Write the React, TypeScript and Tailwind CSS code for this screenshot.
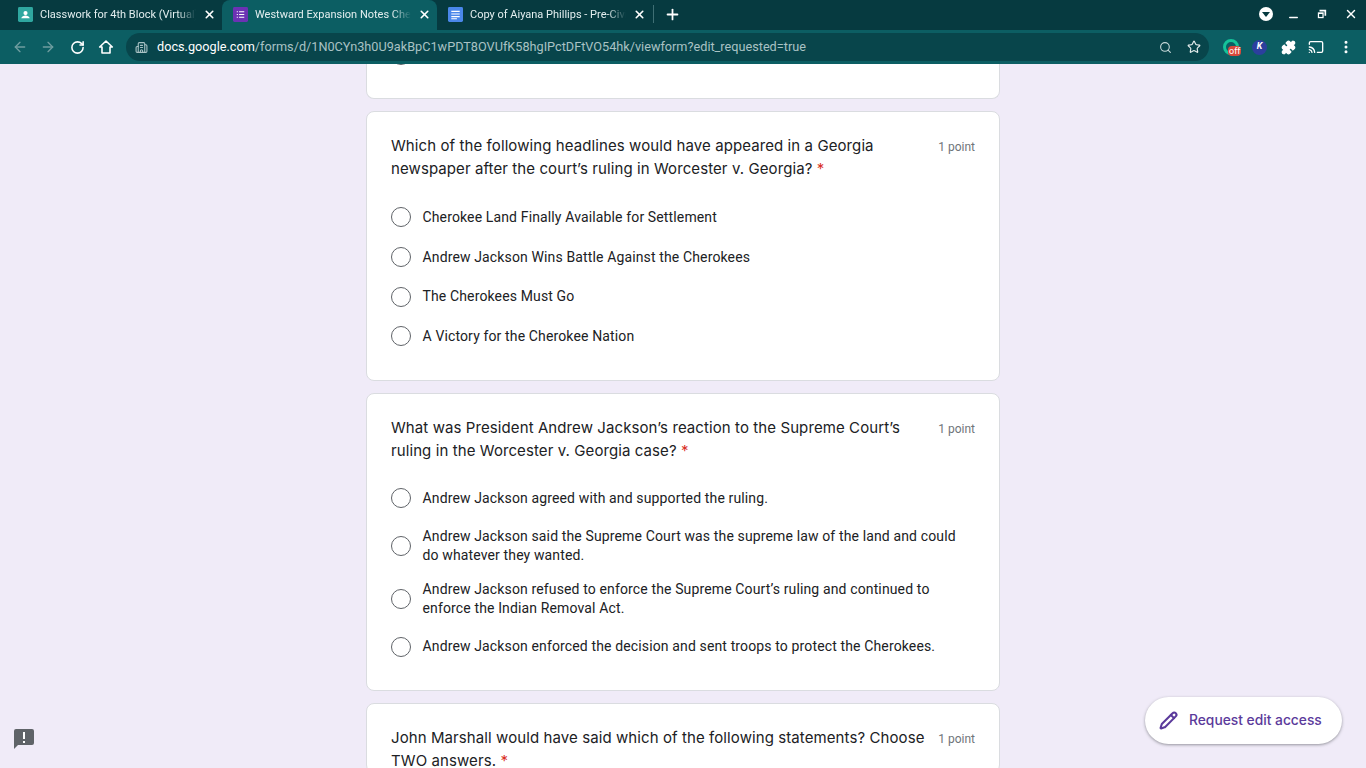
import React from 'react';
import { ArrowLeft, ArrowRight, RotateCw, Search, Star, Puzzle, Cast, EllipsisVertical, X, Plus, Minus, Pencil, Building2 } from 'lucide-react';

const sans = "font-['Roboto','Liberation_Sans',sans-serif]";

const Radio = () => (
  <div className="w-5 h-5 shrink-0 rounded-full border-[1.5px] border-[#5f6368] bg-white" />
);

const Option = ({ label, h }: { label: React.ReactNode; h: string }) => (
  <div className={`flex items-center gap-[11.5px] ${h}`}>
    <Radio />
    <div className="text-sm leading-[19px] tracking-[0.135px] text-[#202124]">{label}</div>
  </div>
);

const Question = ({ title, children }: { title: React.ReactNode; children?: React.ReactNode }) => (
  <section className="w-[634px] shrink-0 rounded-lg border border-[#dadce0] bg-white px-6 pt-[23.5px]">
    <div className="flex justify-between">
      <h2 className="-mt-[2px] w-[538px] font-['Inter',sans-serif] text-[15px] leading-[23px] tracking-[0.09px] text-[#202124]">
        {title} <span className="text-[#d93025]">*</span>
      </h2>
      <span className="pt-[1px] text-xs leading-[20px] text-[#70757a]">1 point</span>
    </div>
    {children}
  </section>
);

const Tab = ({ icon, title, active }: { icon: React.ReactNode; title: string; active?: boolean }) => (
  <div className={`relative flex h-[30px] w-[215px] items-center pb-[2px] pl-[11px] pr-[6px] ${active ? 'bg-[#0c5e63] rounded-t-lg' : ''}`}>
    <div className="w-[15px] h-[15px] shrink-0">{icon}</div>
    <div className="ml-[7px] mt-[2px] w-[156px] overflow-hidden whitespace-nowrap text-[11px] leading-4 text-[#e3eeef] [mask-image:linear-gradient(to_right,black_88%,transparent)]">
      {title}
    </div>
    <X size={13} strokeWidth={3} className="ml-auto text-white" />
  </div>
);

const ClassroomIcon = () => (
  <svg viewBox="0 0 16 16" className="w-full h-full">
    <rect width="16" height="16" rx="1.5" fill="#2fa7a0" />
    <circle cx="8" cy="6.5" r="2.2" fill="#fff" />
    <path d="M3.5 12c.6-2 2.4-3 4.5-3s3.9 1 4.5 3z" fill="#fff" />
  </svg>
);

const FormsIcon = () => (
  <svg viewBox="0 0 16 16" className="w-full h-full">
    <rect width="16" height="16" rx="1.5" fill="#6b32b4" />
    <path d="M4 4.5h1.2v1.2H4zM6.5 4.5H12v1.2H6.5zM4 7.4h1.2v1.2H4zM6.5 7.4H12v1.2H6.5zM4 10.3h1.2v1.2H4zM6.5 10.3H12v1.2H6.5z" fill="#fff" />
  </svg>
);

const DocsIcon = () => (
  <svg viewBox="0 0 16 16" className="w-full h-full">
    <rect width="16" height="16" rx="1.5" fill="#4a87ea" />
    <path d="M3.5 4h9v1.3h-9zM3.5 6.8h9v1.3h-9zM3.5 9.6h9v1.3h-9zM3.5 12h6v1h-6z" fill="#fff" />
  </svg>
);

export default function App() {
  return (
    <div className={`flex h-[768px] w-[1366px] flex-col overflow-hidden bg-[#f0ebf8] ${sans}`}>
      {/* Tab strip */}
      <div className="flex h-[30px] shrink-0 items-center bg-[#063a40] pl-[7px]">
        <Tab icon={<ClassroomIcon />} title="Classwork for 4th Block (Virtual)" />
        <Tab icon={<FormsIcon />} title="Westward Expansion Notes Check" active />
        <Tab icon={<DocsIcon />} title="Copy of Aiyana Phillips - Pre-Civil" />
        <div className="mb-[2px] ml-[1px] h-[18px] w-px bg-[#3f6f74]" />
        <Plus size={17} strokeWidth={2.5} className="mb-[2px] ml-[10px] text-white" />
        <div className="mb-[2px] ml-auto flex items-center">
          <div className="flex h-[14px] w-[14px] items-center justify-center rounded-full bg-white">
            <div className="h-0 w-0 border-x-[4px] border-t-[5px] border-x-transparent border-t-[#063a40]" />
          </div>
          <Minus size={13} strokeWidth={2.5} className="ml-[14px] mt-[6px] text-white" />
          <svg viewBox="0 0 12 12" className="ml-[17px] w-[10px] h-[10px]">
            <path d="M3 1h8v7H9V3H3z" fill="#fff" />
            <rect x="1" y="4" width="7" height="7" fill="#fff" />
            <rect x="2.5" y="6" width="4" height="3.5" fill="#063a40" />
          </svg>
          <X size={14} strokeWidth={2.5} className="ml-[17px] mr-[8px] text-white" />
        </div>
      </div>

      {/* Toolbar */}
      <div className="flex h-[34px] shrink-0 items-center bg-[#0c5e63] pl-[12px]">
        <ArrowLeft size={16} className="text-[#6f9da0]" />
        <ArrowRight size={16} className="ml-[12px] text-[#6f9da0]" />
        <RotateCw size={15} strokeWidth={2.5} className="ml-[14px] text-white" />
        <svg viewBox="0 0 24 24" fill="none" stroke="#fff" strokeWidth="2.4" strokeLinejoin="round" className="ml-[13px] h-4 w-4">
          <path d="M12 3 2.5 12H6v9h12v-9h3.5z" />
        </svg>
        <div className="ml-[12px] flex h-[28px] w-[1083px] items-center rounded-full bg-[#08454b] pl-[9px] pr-[8px]">
          <Building2 size={13} className="text-[#a9c2c4]" />
          <div className="ml-[9px] text-[12.7px] text-[#a9c2c4]">
            <span className="text-white">docs.google.com</span>/forms/d/1N0CYn3h0U9akBpC1wPDT8OVUfK58hgIPctDFtVO54hk/viewform?edit_requested=true
          </div>
          <Search size={13} className="ml-auto text-[#c8d8d9]" />
          <Star size={14} className="ml-[15px] text-[#e4ecec]" />
        </div>
        <div className="relative ml-[14px] h-4 w-4 rounded-full border-[3px] border-[#15c39a]">
          <div className="absolute left-[2px] top-[4px] rounded-sm bg-[#d9483b] px-[1px] text-[9px] leading-[10px] text-white">off</div>
        </div>
        <div className="ml-[13px] flex h-[15px] w-[15px] items-center justify-center rounded-full bg-[#2c3f9e] text-[9px] font-bold italic text-white">K</div>
        <Puzzle size={15} fill="#fff" className="ml-[14px] text-white" />
        <Cast size={16} className="ml-[12px] text-white" />
        <EllipsisVertical size={16} strokeWidth={2.5} className="ml-[14px] text-white" />
      </div>

      {/* Page */}
      <div className="relative flex min-h-0 flex-1 flex-col items-center gap-[12px] overflow-hidden">
        <div className="flex h-[35px] w-[634px] shrink-0 flex-col rounded-b-lg border border-t-0 border-[#dadce0] bg-white pl-6">
          <div className="-mt-[19px]"><Radio /></div>
        </div>

        <Question
          title={<>Which of the following headlines would have appeared in a Georgia newspaper after the court’s ruling in Worcester v. Georgia?</>}
        >
          <div className="mt-[17.5px] pb-[24px]">
            <Option h="h-[40px]" label="Cherokee Land Finally Available for Settlement" />
            <Option h="h-[40px]" label="Andrew Jackson Wins Battle Against the Cherokees" />
            <Option h="h-[39px]" label="The Cherokees Must Go" />
            <Option h="h-[40px]" label="A Victory for the Cherokee Nation" />
          </div>
        </Question>

        <Question
          title={<>What was President Andrew Jackson’s reaction to the Supreme Court’s ruling in the Worcester v. Georgia case?</>}
        >
          <div className="mt-[17.5px] pb-[22px]">
            <Option h="h-[38px]" label="Andrew Jackson agreed with and supported the ruling." />
            <Option h="h-[53px] mt-[2px]" label="Andrew Jackson said the Supreme Court was the supreme law of the land and could do whatever they wanted." />
            <Option h="h-[53px]" label="Andrew Jackson refused to enforce the Supreme Court’s ruling and continued to enforce the Indian Removal Act." />
            <Option h="h-[43px]" label="Andrew Jackson enforced the decision and sent troops to protect the Cherokees." />
          </div>
        </Question>

        <Question title={<>John Marshall would have said which of the following statements? Choose TWO answers.</>} />

        {/* Feedback */}
        <svg viewBox="0 0 24 24" className="absolute left-[12px] top-[663px] h-6 w-6">
          <path d="M4 2h16a2 2 0 0 1 2 2v12a2 2 0 0 1-2 2H6l-4 4V4a2 2 0 0 1 2-2z" fill="#5f6368" />
          <path d="M11 5h2v7h-2zM11 14h2v2h-2z" fill="#fff" />
        </svg>

        {/* Request edit access */}
        <div className="absolute left-[1145px] top-[633px] flex h-[47px] w-[197px] items-center rounded-full bg-white pl-[14px] shadow-[0_1px_3px_rgba(60,64,67,0.5)]">
          <Pencil size={19} strokeWidth={2.6} className="text-[#5b3a9b]" />
          <span className="ml-[11px] font-['Inter',sans-serif] text-[13.8px] font-medium text-[#5b3a9b]">Request edit access</span>
        </div>
      </div>
    </div>
  );
}
